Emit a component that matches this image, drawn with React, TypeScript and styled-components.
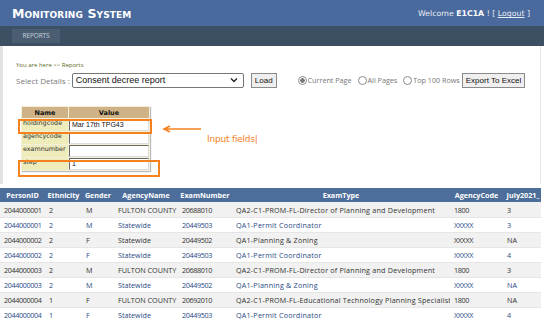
import React from "react";
import styled, { createGlobalStyle } from "styled-components";

const Global = createGlobalStyle`
  html, body { margin: 0; padding: 0; background: #fff; }
  body { width: 544px; height: 321px; overflow: hidden; font-family: "Open Sans", "Noto Sans", sans-serif; }
  * { box-sizing: border-box; }
`;

const Page = styled.div`
  width: 544px;
  height: 321px;
  overflow: hidden;
  display: flex;
  flex-direction: column;
`;

const Header = styled.header`
  height: 26px;
  background: #4a6a9d;
  display: flex;
  align-items: center;
  justify-content: space-between;
  padding: 2px 14px 0 12px;
`;

const Title = styled.h1`
  margin: 0;
  font-family: "DejaVu Sans", sans-serif;
  font-weight: bold;
  font-size: 12.5px;
  font-variant: small-caps;
  letter-spacing: 0.1px;
  color: #fff;
`;

const Welcome = styled.div`
  font-family: "DejaVu Sans", sans-serif;
  font-size: 7.8px;
  color: #e8edf5;
  b { color: #fff; }
  a { color: #e8edf5; text-decoration: underline; }
`;

const NavBar = styled.nav`
  height: 21px;
  background: #3c4f63;
  display: flex;
  align-items: center;
  padding-left: 12px;
`;

const Tab = styled.div`
  height: 14px;
  width: 48px;
  background: #4a5d72;
  color: #c9d2dc;
  font-size: 6.5px;
  display: flex;
  align-items: center;
  justify-content: center;
  letter-spacing: -0.1px;
`;

const Content = styled.section`
  border-left: 3px solid #e2e2e2;
  border-right: 1px solid #e4e4e4;
  margin-right: 3px;
  padding: 15px 0 0 13px;
  height: 140px;
  display: flex;
  flex-direction: column;
`;

const Breadcrumb = styled.div`
  font-size: 6px;
  color: #5b6a1e;
  line-height: 8px;
`;

const Controls = styled.div`
  display: flex;
  align-items: center;
  margin-top: 3px;
  height: 16px;
`;

const Label = styled.span`
  font-size: 8px;
  color: #7a7a7a;
  margin-right: 2px;
`;

const Select = styled.div`
  width: 172px;
  height: 15px;
  border: 1px solid #767676;
  border-radius: 2px;
  font-family: "Liberation Sans", Arial, sans-serif;
  font-size: 9px;
  color: #111;
  display: flex;
  align-items: center;
  justify-content: space-between;
  padding: 0 5px 0 3px;
`;

const Button = styled.div<{ $gap?: number }>`
  height: 15px;
  margin-left: ${(p) => p.$gap ?? 0}px;
  border: 1px solid #8a8a8a;
  background: #efefef;
  font-family: "Liberation Sans", Arial, sans-serif;
  font-size: 8px;
  color: #111;
  display: flex;
  align-items: center;
  padding: 0 3px;
`;

const Radios = styled.div`
  display: flex;
  align-items: center;
  margin-left: 21px;
  margin-right: 2px;
  font-size: 7.2px;
  color: #777;
  gap: 6px;
`;

const Radio = styled.span<{ $on?: boolean }>`
  display: inline-flex;
  align-items: center;
  gap: 1px;
  &::before {
    content: "";
    width: 7px;
    height: 7px;
    border-radius: 50%;
    border: 1px solid #8a8a8a;
    background: ${(p) => (p.$on ? "radial-gradient(circle, #777 0 2px, #fff 2.5px)" : "#fff")};
  }
`;

const FormArea = styled.div`
  position: relative;
  margin-top: 18px;
  margin-left: 5px;
  display: flex;
  align-items: flex-start;
`;

const ParamTable = styled.table`
  border-collapse: separate;
  border-spacing: 1px;
  background: #f3efd9;
  box-shadow: 1px 1px 1px #bbb;
  font-family: "DejaVu Sans", sans-serif;
  font-size: 6.4px;
  width: 129px;
`;

const ParamHead = styled.th`
  background: #cfb386;
  color: #111;
  font-weight: bold;
  height: 11px;
  padding: 0;
  font-size: 6.5px;
`;

const ParamName = styled.td`
  background: #efecbc;
  color: #333;
  height: 12px;
  padding: 0 1px;
  width: 46px;
  vertical-align: top;
`;

const ParamValue = styled.td`
  background: #f7f5e8;
  padding: 0;
`;

const Field = styled.div`
  height: 12px;
  background: #fff;
  border-top: 1px solid #666;
  border-left: 1px solid #666;
  border-right: 1px solid #ddd;
  border-bottom: 1px solid #ddd;
  font-family: "Liberation Sans", Arial, sans-serif;
  font-size: 7px;
  color: #111;
  padding-left: 2px;
  line-height: 10px;
`;

const Highlight = styled.div<{ $top: number; $w: number; $h: number }>`
  position: absolute;
  left: -3px;
  top: ${(p) => p.$top}px;
  width: ${(p) => p.$w}px;
  height: ${(p) => p.$h}px;
  border: 2px solid #f5821f;
`;

const Annotation = styled.div`
  position: absolute;
  left: 141px;
  top: 19px;
  display: flex;
  flex-direction: column;
`;

const Note = styled.div`
  font-family: "DejaVu Sans", sans-serif;
  font-size: 9px;
  color: #f5821f;
  margin: 1px 0 0 45px;
  letter-spacing: -0.2px;
`;

const TableWrap = styled.div`
  margin-top: 4px;
  overflow: hidden;
  width: 541px;
`;

const DataTable = styled.table`
  border-collapse: collapse;
  table-layout: fixed;
  width: 543px;
  font-family: "Open Sans", sans-serif;
  font-size: 7.2px;
`;

const Th = styled.th`
  background: #4d6d9a;
  color: #fff;
  font-weight: bold;
  height: 14px;
  padding: 0;
  text-align: center;
  white-space: nowrap;
  font-size: 7.2px;
`;

const Tr = styled.tr<{ $alt: boolean }>`
  background: ${(p) => (p.$alt ? "#f1f1f1" : "#fff")};
  color: ${(p) => (p.$alt ? "#333" : "#2b4a86")};
  border-bottom: 1px solid #e6e6e6;
`;

type Kind = "num" | "text" | "wide";

const spacing: Record<Kind, string> = { num: "-0.35px", text: "0", wide: "0.2px" };

const Td = styled.td<{ $kind: Kind }>`
  height: 15px;
  padding: 0 0 0 4px;
  white-space: nowrap;
  overflow: hidden;
  letter-spacing: ${(p) => spacing[p.$kind]};
`;

const columns: { name: string; w: number; kind: Kind }[] = [
  { name: "PersonID", w: 45, kind: "num" },
  { name: "Ethnicity", w: 37, kind: "num" },
  { name: "Gender", w: 32, kind: "text" },
  { name: "AgencyName", w: 64, kind: "text" },
  { name: "ExamNumber", w: 54, kind: "num" },
  { name: "ExamType", w: 218, kind: "wide" },
  { name: "AgencyCode", w: 53, kind: "num" },
  { name: "July2021_", w: 40, kind: "text" },
];

const rows = [
  ["2044000001", "2", "M", "FULTON COUNTY", "20688010", "QA2-C1-PROM-FL-Director of Planning and Development", "1800", "3"],
  ["2044000001", "2", "M", "Statewide", "20449503", "QA1-Permit Coordinator", "XXXXX", "3"],
  ["2044000002", "2", "F", "Statewide", "20449502", "QA1-Planning & Zoning", "XXXXX", "NA"],
  ["2044000002", "2", "F", "Statewide", "20449503", "QA1-Permit Coordinator", "XXXXX", "4"],
  ["2044000003", "2", "M", "FULTON COUNTY", "20688010", "QA2-C1-PROM-FL-Director of Planning and Development", "1800", "3"],
  ["2044000003", "2", "M", "Statewide", "20449502", "QA1-Planning & Zoning", "XXXXX", "NA"],
  ["2044000004", "1", "F", "FULTON COUNTY", "20692010", "QA2-C1-PROM-FL-Educational Technology Planning Specialist", "1800", "NA"],
  ["2044000004", "1", "F", "Statewide", "20449503", "QA1-Permit Coordinator", "XXXXX", "4"],
];

const params = [
  ["holdingcode", "Mar 17th TPG43"],
  ["agencycode", ""],
  ["examnumber", ""],
  ["step", "1"],
];

export default function App() {
  return (
    <Page>
      <Global />
      <Header>
        <Title>Monitoring System</Title>
        <Welcome>
          Welcome <b>E1C1A</b> ! [ <a>Logout</a> ]
        </Welcome>
      </Header>
      <NavBar>
        <Tab>REPORTS</Tab>
      </NavBar>
      <Content>
        <Breadcrumb>You are here &gt;&gt; Reports</Breadcrumb>
        <Controls>
          <Label>Select Details :</Label>
          <Select>
            <span>Consent decree report</span>
            <svg width="8" height="6" viewBox="0 0 8 6">
              <path d="M1 1.5 L4 4.5 L7 1.5" fill="none" stroke="#222" strokeWidth="1.4" />
            </svg>
          </Select>
          <Button $gap={7}>Load</Button>
          <Radios>
            <Radio $on>Current Page</Radio>
            <Radio>All Pages</Radio>
            <Radio>Top 100 Rows</Radio>
          </Radios>
          <Button>Export To Excel</Button>
        </Controls>
        <FormArea>
          <ParamTable>
            <thead>
              <tr>
                <ParamHead>Name</ParamHead>
                <ParamHead>Value</ParamHead>
              </tr>
            </thead>
            <tbody>
              {params.map(([n, v]) => (
                <tr key={n}>
                  <ParamName>{n}</ParamName>
                  <ParamValue>
                    <Field>{v}</Field>
                  </ParamValue>
                </tr>
              ))}
            </tbody>
          </ParamTable>
          <Highlight $top={13} $w={134} $h={15} />
          <Highlight $top={54} $w={142} $h={17} />
          <Annotation>
            <svg width="40" height="8" viewBox="0 0 40 8">
              <path d="M39 4 H3 M8 1 L2 4 L8 7" fill="none" stroke="#f5821f" strokeWidth="1.6" />
            </svg>
            <Note>Input fields|</Note>
          </Annotation>
        </FormArea>
      </Content>
      <TableWrap>
        <DataTable>
          <colgroup>
            {columns.map((c) => (
              <col key={c.name} style={{ width: c.w }} />
            ))}
          </colgroup>
          <thead>
            <tr>
              {columns.map((c) => (
                <Th key={c.name}>{c.name}</Th>
              ))}
            </tr>
          </thead>
          <tbody>
            {rows.map((r, i) => (
              <Tr key={i} $alt={i % 2 === 0}>
                {r.map((c, j) => (
                  <Td key={j} $kind={columns[j].kind}>
                    {c}
                  </Td>
                ))}
              </Tr>
            ))}
          </tbody>
        </DataTable>
      </TableWrap>
    </Page>
  );
}
